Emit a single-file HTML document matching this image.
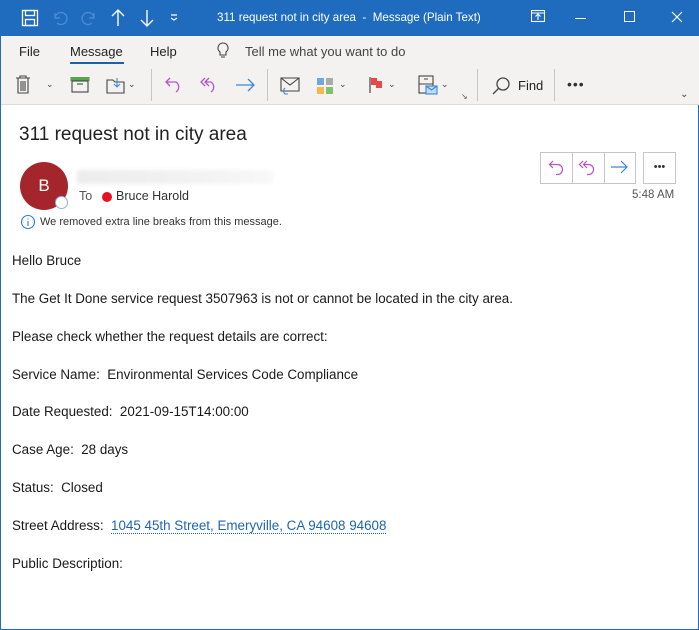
<!DOCTYPE html>
<html><head><meta charset="utf-8"><style>
*{margin:0;padding:0;box-sizing:border-box}
body{width:699px;height:630px;overflow:hidden;font-family:"Liberation Sans",sans-serif;background:#fff;position:relative;border-left:1px solid #1e6bbf;border-right:1px solid #1e6bbf;border-bottom:1px solid #1e6bbf}
.tb{position:absolute;left:0;top:0;width:699px;height:36px;background:#1f6bbe;color:#fff}
.a{position:absolute}
.rib{position:absolute;left:0;top:36px;width:699px;height:69px;background:#f3f2f1;border-bottom:1px solid #dcdcdc}
.t{position:absolute;font-size:13px;color:#222;white-space:nowrap}
.sep{position:absolute;width:1px;height:32px;background:#c8c6c4;top:69px}
.body .t{font-size:13.4px;color:#1a1a1a}
</style></head><body>
<div class="tb">
<svg class="a" style="left:20px;top:9px" width="18" height="18" fill="none" stroke="#fff" stroke-width="1.3"><rect x="1.5" y="1.5" width="15" height="15"/><rect x="4.5" y="1.5" width="9" height="5"/><rect x="4.5" y="10.5" width="9" height="6"/></svg>
<svg class="a" style="left:50px;top:9px" width="18" height="18" fill="none" stroke="#4a8ad6" stroke-width="1.4"><path d="M4 4v5h5M4 9a6 6 0 1 1 2 5"/></svg>
<svg class="a" style="left:79px;top:9px" width="18" height="18" fill="none" stroke="#4a8ad6" stroke-width="1.4"><path d="M14 4v5h-5M14 9a6 6 0 1 0-2 5"/></svg>
<svg class="a" style="left:108px;top:8px" width="18" height="20" fill="none" stroke="#fff" stroke-width="1.4"><path d="M9 18V2M3 8l6-6 6 6"/></svg>
<svg class="a" style="left:137px;top:8px" width="18" height="20" fill="none" stroke="#fff" stroke-width="1.4"><path d="M9 2v16M3 12l6 6 6-6"/></svg>
<svg class="a" style="left:168px;top:12px" width="10" height="10" fill="none" stroke="#fff" stroke-width="1.2"><path d="M2 3h6M2 6l3 2 3-2"/></svg>
<div class="t" style="left:216px;top:11px;color:#fff;font-size:11.6px">311 request not in city area&nbsp; - &nbsp;Message (Plain Text)</div>
<svg class="a" style="left:530px;top:10px" width="14" height="13" fill="none" stroke="#fff" stroke-width="1.1"><rect x="0.5" y="0.5" width="13" height="11"/><path d="M7 10V4M4.5 6.5L7 4l2.5 2.5M0.5 3h13"/></svg>
<div class="a" style="left:574px;top:18px;width:11px;height:1px;background:#fff"></div>
<div class="a" style="left:623px;top:11px;width:11px;height:11px;border:1px solid #fff"></div>
<svg class="a" style="left:670px;top:11px" width="12" height="12" stroke="#fff" stroke-width="1.2"><path d="M1 1l10 10M11 1L1 11"/></svg>
</div>
<div class="rib">
<div class="t" style="left:18px;top:8px">File</div>
<div class="t" style="left:69px;top:8px">Message</div>
<div class="a" style="left:69px;top:26px;width:54px;height:2px;background:#1e5fa8"></div>
<div class="t" style="left:149px;top:8px">Help</div>
<svg class="a" style="left:215px;top:6px" width="14" height="18" fill="none" stroke="#444" stroke-width="1.1"><path d="M7 1a5 5 0 0 0-3 9v3h6v-3a5 5 0 0 0-3-9zM5 15h4"/></svg>
<div class="t" style="left:244px;top:8px;color:#444">Tell me what you want to do</div>
</div>
<svg class="a" style="left:14px;top:75px" width="16" height="20" fill="none" stroke="#444" stroke-width="1.1"><path d="M1 3h14M5 3V1h6v2M3 3v15h10V3M6 6v10M8 6v10M10 6v10"/></svg>
<div class="t" style="left:45px;top:79px;font-size:9px;color:#444">⌄</div>
<svg class="a" style="left:69px;top:77px" width="20" height="16" fill="none" stroke="#444" stroke-width="1.1"><rect x="1" y="0.5" width="18" height="3" fill="#57a64a" stroke="#57a64a"/><rect x="2" y="4" width="16" height="11"/><path d="M7 7h6"/></svg>
<svg class="a" style="left:105px;top:75px" width="20" height="20" fill="none" stroke="#444" stroke-width="1.1"><path d="M1 5h6l2 2h9v11H1z"/><path d="M11 3v9M8 9l3 3 3-3" stroke="#3a8ad6"/></svg>
<div class="t" style="left:127px;top:79px;font-size:9px;color:#444">⌄</div>
<div class="sep" style="left:150px"></div>
<svg class="a" style="left:163px;top:76px" width="22" height="18" fill="none" stroke="#b455c2" stroke-width="1.3"><path d="M6 2L2 6l4 4M2 6h10a6 6 0 0 1 0 10"/></svg>
<svg class="a" style="left:198px;top:76px" width="22" height="18" fill="none" stroke="#b455c2" stroke-width="1.3"><path d="M6 2L2 6l4 4M10 2L6 6l4 4M6 6h6a6 6 0 0 1 0 10"/></svg>
<svg class="a" style="left:234px;top:76px" width="22" height="18" fill="none" stroke="#3a87d4" stroke-width="1.3"><path d="M1 9h18M13 3l6 6-6 6"/></svg>
<div class="sep" style="left:266px"></div>
<svg class="a" style="left:278px;top:76px" width="22" height="20" fill="none" stroke="#444" stroke-width="1.1"><path d="M2 2h18v13H2zM2 2l9 7 9-7"/><path d="M6 12a4 4 0 0 0 0 6h3" stroke="#3a87d4"/></svg>
<svg class="a" style="left:315px;top:77px" width="20" height="18"><rect x="1" y="1" width="7" height="7" fill="#6fa8e0"/><rect x="10" y="1" width="7" height="7" fill="#aaa"/><rect x="1" y="10" width="7" height="7" fill="#f5b84c"/><rect x="10" y="10" width="7" height="7" fill="#7cc36b"/></svg>
<div class="t" style="left:338px;top:79px;font-size:9px;color:#444">⌄</div>
<svg class="a" style="left:367px;top:76px" width="16" height="18"><path d="M2 1v16" stroke="#444" stroke-width="1.2"/><path d="M3 2h6v3h5v7H8V9H3z" fill="#e8474c"/></svg>
<div class="t" style="left:387px;top:79px;font-size:9px;color:#444">⌄</div>
<svg class="a" style="left:416px;top:75px" width="22" height="22" fill="none" stroke="#444" stroke-width="1.1"><rect x="2" y="1" width="14" height="17"/><path d="M2 9h14M7 4h4"/><rect x="9" y="11" width="11" height="8" fill="#bcdcf5" stroke="#3a87d4"/><path d="M9 11l5.5 4 5.5-4" stroke="#3a87d4"/></svg>
<div class="t" style="left:440px;top:79px;font-size:9px;color:#444">⌄</div>
<div class="t" style="left:460px;top:92px;font-size:8px;color:#555">↘</div>
<div class="sep" style="left:476px"></div>
<svg class="a" style="left:490px;top:76px" width="20" height="20" fill="none" stroke="#444" stroke-width="1.3"><circle cx="12" cy="8" r="6"/><path d="M8 12l-6 6"/></svg>
<div class="t" style="left:517px;top:78px">Find</div>
<div class="sep" style="left:553px"></div>
<div class="t" style="left:566px;top:76px;font-size:14px;color:#333;letter-spacing:1px">•••</div>
<div class="t" style="left:679px;top:89px;font-size:10px;color:#444">⌄</div>

<div class="t" style="left:18px;top:124px;font-size:19px;color:#222">311 request not in city area</div>
<div class="a" style="left:19px;top:162px;width:48px;height:48px;border-radius:50%;background:#a4262c;color:#fff;font-size:17px;text-align:center;line-height:48px">B</div>
<div class="a" style="left:54px;top:196px;width:13px;height:13px;border-radius:50%;background:#fff;border:1px solid #8ab4d8"></div>
<div class="a" style="left:76px;top:170px;width:196px;height:14px;background:linear-gradient(90deg,#ececec,#f2f2f2 60%,#f8f8f8);filter:blur(2px)"></div>
<div class="t" style="left:78px;top:189px;color:#555;font-size:12.5px">To</div>
<div class="a" style="left:101px;top:192px;width:10px;height:10px;border-radius:50%;background:#e81123"></div>
<div class="t" style="left:115px;top:189px;color:#333;font-size:12.5px">Bruce Harold</div>
<svg class="a" style="left:19px;top:214px" width="16" height="16" fill="none" stroke="#2b7cd3" stroke-width="1.1"><circle cx="8" cy="8" r="6.5"/><path d="M8 7v5M8 4.5v1"/></svg>
<div class="t" style="left:39px;top:216px;font-size:11px;color:#333">We removed extra line breaks from this message.</div>
<div class="a" style="left:539px;top:152px;width:96px;height:32px;border:1px solid #c8c6c4;background:#fff"></div>
<div class="a" style="left:571px;top:152px;width:1px;height:32px;background:#c8c6c4"></div>
<div class="a" style="left:603px;top:152px;width:1px;height:32px;background:#c8c6c4"></div>
<svg class="a" style="left:547px;top:159px" width="18" height="18" fill="none" stroke="#b455c2" stroke-width="1.2"><path d="M5 2L1.5 5.5 5 9M1.5 5.5h8a5 5 0 0 1 0 10H8"/></svg>
<svg class="a" style="left:577px;top:159px" width="20" height="18" fill="none" stroke="#b455c2" stroke-width="1.2"><path d="M5 2L1.5 5.5 5 9M9 2L5.5 5.5 9 9M5.5 5.5h5a5 5 0 0 1 0 10H9"/></svg>
<svg class="a" style="left:609px;top:159px" width="20" height="18" fill="none" stroke="#3a87d4" stroke-width="1.2"><path d="M1 8h16M11 2l6 6-6 6"/></svg>
<div class="a" style="left:642px;top:152px;width:33px;height:32px;border:1px solid #c8c6c4;text-align:center;font-size:11px;line-height:28px;color:#333">•••</div>
<div class="t" style="left:631px;top:189px;font-size:11.5px;color:#555">5:48 AM</div>

<div class="body">
<div class="t" style="left:11px;top:253px">Hello Bruce</div>
<div class="t" style="left:11px;top:291px">The Get It Done service request 3507963 is not or cannot be located in the city area.</div>
<div class="t" style="left:11px;top:329px">Please check whether the request details are correct:</div>
<div class="t" style="left:11px;top:367px">Service Name:&nbsp; Environmental Services Code Compliance</div>
<div class="t" style="left:11px;top:404px">Date Requested:&nbsp; 2021-09-15T14:00:00</div>
<div class="t" style="left:11px;top:442px">Case Age:&nbsp; 28 days</div>
<div class="t" style="left:11px;top:480px">Status:&nbsp; Closed</div>
<div class="t" style="left:11px;top:518px">Street Address:&nbsp; <span style="color:#1e64b4;border-bottom:1px dotted #1e64b4">1045 45th Street, Emeryville, CA 94608 94608</span></div>
<div class="t" style="left:11px;top:556px">Public Description:</div>
</div>
</body></html>
